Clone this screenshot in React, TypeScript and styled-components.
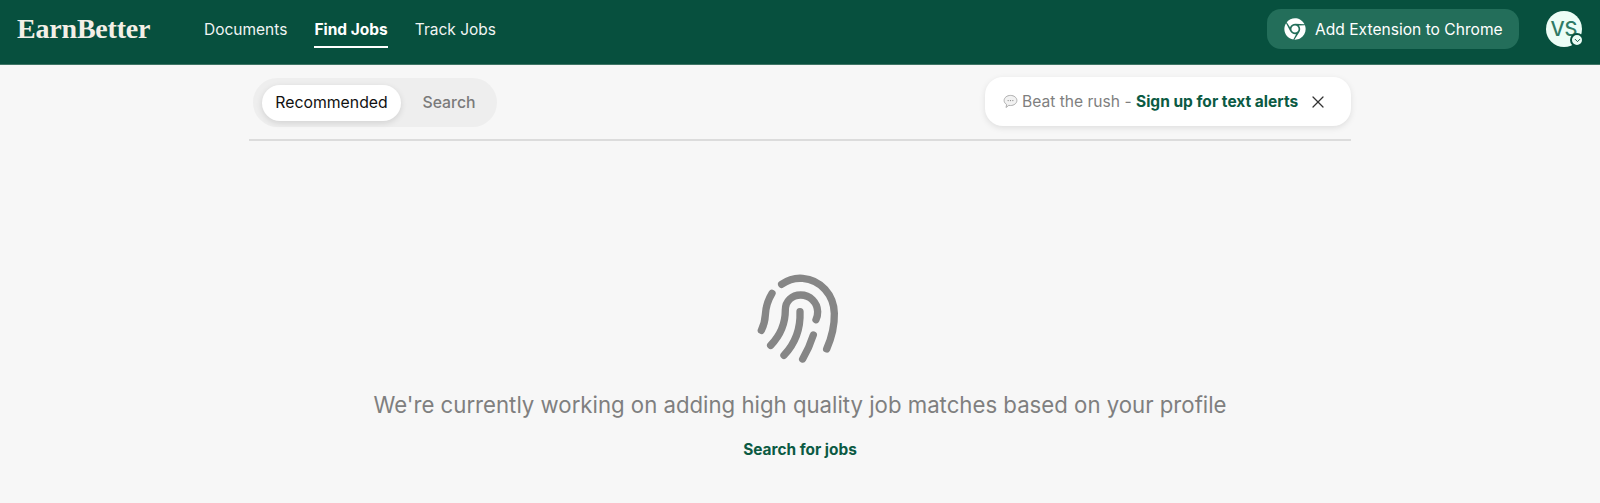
import { createGlobalStyle, styled } from "styled-components";
import { FaChrome } from "react-icons/fa";
import { X, ChevronDown } from "lucide-react";

const GlobalStyle = createGlobalStyle`
  html, body {
    margin: 0;
    padding: 0;
    background: #f7f7f7;
    font-family: "Inter", "Liberation Sans", sans-serif;
  }
  * { box-sizing: border-box; }
`;

const Page = styled.div`
  height: 503px;
  overflow: hidden;
  background: #f7f7f7;
`;

const Header = styled.header`
  height: 65px;
  background: #07503e;
  border-bottom: 1px solid #3f7666;
  display: flex;
  align-items: center;
  padding: 0 18px 6px 17px;
`;

const Logo = styled.div`
  font-family: "Liberation Serif", serif;
  font-weight: 700;
  font-size: 28px;
  letter-spacing: -0.2px;
  color: #f3efe6;
  width: 187px;
`;

const Nav = styled.nav`
  display: flex;
  gap: 27px;
  align-items: center;
`;

const NavLink = styled.a<{ $active?: boolean }>`
  font-size: 15.5px;
  line-height: 20px;
  color: #fff;
  font-weight: ${(p) => (p.$active ? 700 : 400)};
  padding: 9px 0 6px;
  border-bottom: 2px solid ${(p) => (p.$active ? "#fff" : "transparent")};
  opacity: ${(p) => (p.$active ? 1 : 0.94)};
`;

const HeaderRight = styled.div`
  margin-left: auto;
  display: flex;
  align-items: center;
  gap: 27px;
`;

const ChromeButton = styled.button`
  width: 252px;
  height: 40px;
  border: 0;
  border-radius: 14px;
  background: #236e5a;
  color: #fff;
  font-family: inherit;
  font-size: 15.6px;
  display: flex;
  align-items: center;
  gap: 9px;
  padding: 0 0 0 17px;
  svg {
    font-size: 22px;
    color: #fff;
  }
`;

const Avatar = styled.div`
  position: relative;
  width: 36px;
  height: 36px;
  border-radius: 50%;
  background: #ecfdf6;
  color: #2f7a65;
  font-size: 20px;
  font-weight: 500;
  display: flex;
  align-items: center;
  justify-content: center;
`;

const AvatarBadge = styled.span`
  position: absolute;
  right: -2px;
  bottom: 0;
  width: 14px;
  height: 14px;
  border-radius: 50%;
  background: #ecfdf6;
  border: 2px solid #07503e;
  color: #07503e;
  display: flex;
  align-items: center;
  justify-content: center;
`;

const Content = styled.main`
  width: 1102px;
  margin: 0 auto;
`;

const TopRow = styled.div`
  height: 76px;
  padding: 13px 0 12px 4px;
  border-bottom: 2px solid #dcdcdc;
  display: flex;
  align-items: center;
  justify-content: space-between;
`;

const Tabs = styled.div`
  width: 244px;
  height: 49px;
  border-radius: 25px;
  background: #eeeeee;
  display: flex;
  align-items: center;
  padding: 0 9px;
`;

const Tab = styled.div<{ $active?: boolean }>`
  height: 36px;
  flex: none;
  width: ${(p) => (p.$active ? "139px" : "96px")};
  border-radius: 18px;
  display: flex;
  align-items: center;
  justify-content: center;
  font-size: 15.8px;
  font-weight: ${(p) => (p.$active ? 400 : 500)};
  color: ${(p) => (p.$active ? "#111" : "#7a7a7a")};
  background: ${(p) => (p.$active ? "#fff" : "transparent")};
  box-shadow: ${(p) => (p.$active ? "0 2px 6px rgba(0,0,0,0.12)" : "none")};
`;

const Toast = styled.div`
  width: 366px;
  height: 49px;
  border-radius: 18px;
  background: #fff;
  box-shadow: 0 2px 6px rgba(0, 0, 0, 0.1);
  display: flex;
  align-items: center;
  padding: 0 0 0 18px;
  font-size: 15.6px;
  color: #7f7f7f;
  white-space: pre;
  margin-top: -2px;
`;

const Bubble = styled.svg`
  width: 15px;
  height: 15px;
  margin-right: 4px;
`;

const ToastLink = styled.a`
  color: #0b5a43;
  font-weight: 700;
  font-size: 15.5px;
`;

const CloseIcon = styled(X)`
  margin-left: 10px;
  color: #333;
`;

const Empty = styled.section`
  display: flex;
  flex-direction: column;
  align-items: center;
  padding-top: 124px;
`;

const Message = styled.p`
  margin: 20px 0 0;
  font-size: 22.2px;
  line-height: 30px;
  color: #7f7f7f;
`;

const SearchLink = styled.a`
  margin-top: 20px;
  font-size: 15.4px;
  line-height: 20px;
  font-weight: 700;
  color: #0b5a43;
`;

function Fingerprint() {
  return (
    <svg width="140" height="105" viewBox="0 0 420 315" fill="none" stroke="#868686" strokeWidth="22" strokeLinecap="round" strokeLinejoin="round">
      <path d="M155 58C175 44 195 38 218 40C272 44 312 90 313 145C314 185 304 220 290 252" />
      <path d="M126 85C112 108 107 128 106 150C105 168 101 182 94 196" />
      <path d="M122 241C152 210 166 175 166 135C166 108 186 90 212 90C240 90 262 112 263 140C263 148 262 156 258 164" />
      <path d="M162 271C196 235 212 190 210 140" />
      <path d="M218 282C232 258 242 235 250 210" />
    </svg>
  );
}

export default function App() {
  return (
    <Page>
      <GlobalStyle />
      <Header>
        <Logo>EarnBetter</Logo>
        <Nav>
          <NavLink>Documents</NavLink>
          <NavLink $active>Find Jobs</NavLink>
          <NavLink>Track Jobs</NavLink>
        </Nav>
        <HeaderRight>
          <ChromeButton>
            <FaChrome />
            Add Extension to Chrome
          </ChromeButton>
          <Avatar>
            VS
            <AvatarBadge>
              <ChevronDown size={9} strokeWidth={2.5} />
            </AvatarBadge>
          </Avatar>
        </HeaderRight>
      </Header>
      <Content>
        <TopRow>
          <Tabs>
            <Tab $active>Recommended</Tab>
            <Tab>Search</Tab>
          </Tabs>
          <Toast>
            <Bubble viewBox="0 0 16 16">
              <path d="M8 1.5c3.8 0 6.8 2.4 6.8 5.4S11.800 12.300 8 12.300c-.6 0-1.200-.1-1.800-.2L3.200 14.400l.7-3.200C2.200 10.200 1.200 8.700 1.200 6.900 1.200 3.900 4.200 1.500 8 1.500z" fill="#f2f2f2" stroke="#a9a9a9" strokeWidth="1" />
              <circle cx="5.500" cy="7" r=".7" fill="#888" />
              <circle cx="8" cy="7" r=".7" fill="#888" />
              <circle cx="10.500" cy="7" r=".7" fill="#888" />
            </Bubble>
            Beat the rush - <ToastLink>Sign up for text alerts</ToastLink>
            <CloseIcon size={20} strokeWidth={1.5} />
          </Toast>
        </TopRow>
        <Empty>
          <Fingerprint />
          <Message>We're currently working on adding high quality job matches based on your profile</Message>
          <SearchLink>Search for jobs</SearchLink>
        </Empty>
      </Content>
    </Page>
  );
}
